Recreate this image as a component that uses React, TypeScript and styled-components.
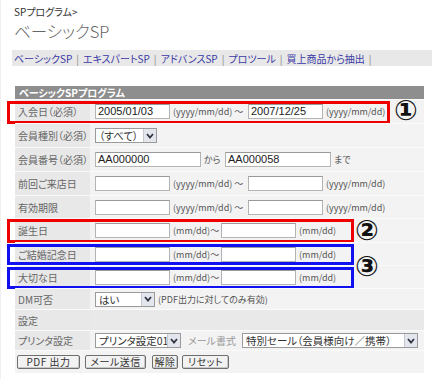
import React from "react";
import styled, { createGlobalStyle } from "styled-components";

const GlobalStyle = createGlobalStyle`
  html, body {
    margin: 0;
    padding: 0;
    background: #ffffff;
  }
  body {
    font-family: "Noto Sans CJK JP", "Noto Sans", sans-serif;
    font-feature-settings: "palt";
    color: #555;
  }
`;

const Page = styled.div`
  width: 432px;
  height: 379px;
  overflow: hidden;
  padding-top: 6px;
  box-sizing: border-box;
  border-left: 1px solid #f0f0f0;
`;

const Crumb = styled.div`
  margin-left: 13px;
  font-size: 10px;
  line-height: 12px;
  color: #333;
`;

const Title = styled.h1`
  margin: 3px 0 0 13px;
  font-size: 16.5px;
  line-height: 21px;
  font-weight: 300;
  color: #666;
`;

const Nav = styled.nav`
  margin: 8px 0 0 11px;
  height: 16px;
  background: #e8e8e8;
  display: flex;
  align-items: center;
  padding-left: 2px;
  font-size: 10px;
`;

const NavLink = styled.a`
  color: #3a3aa6;
  text-decoration: none;
`;

const Sep = styled.span`
  color: #888;
  margin: 0 4px;
`;

const Panel = styled.div`
  position: relative;
  margin: 20px 0 0 14px;
  width: 409px;
  background: #f3f3f3;
`;

const PanelHeader = styled.div`
  height: 13px;
  background: #8e8e8e;
  color: #fff;
  font-size: 10px;
  line-height: 13px;
  font-weight: 700;
  padding-left: 4px;
`;

const Row = styled.div<{ $h: number; $full?: boolean }>`
  position: relative;
  display: flex;
  height: ${(p) => p.$h}px;
  border-top: 1px solid #fafafa;
  background: ${(p) => (p.$full ? "#e9e9e9" : "#f3f3f3")};
`;

const Label = styled.div`
  width: 75px;
  flex: none;
  background: #e8e8e8;
  display: flex;
  align-items: center;
  padding-left: 3px;
  box-sizing: border-box;
  font-size: 10px;
  color: #666;
  white-space: nowrap;
`;

const Field = styled.div`
  flex: 1;
  display: flex;
  align-items: center;
  padding-left: 5px;
  gap: 3px;
  font-size: 10px;
  white-space: nowrap;
`;

const TextBox = styled.div<{ $w: number }>`
  width: ${(p) => p.$w}px;
  height: 15px;
  box-sizing: border-box;
  background: #fff;
  border: 1px solid #b4b4b4;
  border-top-color: #999;
  font-family: "Liberation Sans", Arial, sans-serif;
  font-size: 11px;
  line-height: 13px;
  padding-left: 2px;
  color: #222;
`;

const Hint = styled.span<{ $w?: number }>`
  color: #555;
  font-size: 9px;
  ${(p) => (p.$w ? `width: ${p.$w}px;` : "")}
`;

const SelectBox = styled.div<{ $w: number }>`
  width: ${(p) => p.$w}px;
  height: 15px;
  box-sizing: border-box;
  background: #fff;
  border: 1px solid #9a9a9a;
  display: flex;
  align-items: center;
  font-size: 10.5px;
  color: #333;
`;

const SelectText = styled.span`
  flex: 1;
  padding-left: 3px;
  overflow: hidden;
`;

const Arrow = styled.span`
  width: 12px;
  height: 13px;
  flex: none;
  background: #e3e6ec;
  border-left: 1px solid #c6c9d0;
  display: flex;
  align-items: center;
  justify-content: center;
`;

const GrayText = styled.span`
  color: #999;
  font-size: 10px;
  margin: 0 3px 0 4px;
`;

const Buttons = styled.div`
  display: flex;
  align-items: center;
  padding-left: 2px;
`;

const Btn = styled.button<{ $w: number; $gap: number }>`
  width: ${(p) => p.$w}px;
  margin-right: ${(p) => p.$gap}px;
  height: 14px;
  padding: 0;
  box-sizing: border-box;
  background: #f2f2f2;
  border: 1px solid #6e6e6e;
  border-radius: 2px;
  box-shadow: inset -1px -1px 0 #c8c8c8;
  font-family: "Noto Sans CJK JP", sans-serif;
  font-feature-settings: "palt";
  font-size: 10px;
  line-height: 12px;
  color: #333;
  letter-spacing: 0.5px;
`;

const Mark = styled.div<{ $c: string; $l: number; $w: number; $t: number; $b: number }>`
  position: absolute;
  left: ${(p) => p.$l}px;
  width: ${(p) => p.$w}px;
  top: ${(p) => p.$t}px;
  bottom: ${(p) => p.$b}px;
  border: 3px solid ${(p) => p.$c};
  box-sizing: border-box;
  pointer-events: none;
`;

const Num = styled.div<{ $x: number; $y: number }>`
  position: absolute;
  left: ${(p) => p.$x}px;
  top: ${(p) => p.$y}px;
  font-family: "DejaVu Sans", sans-serif;
  font-size: 28px;
  line-height: 28px;
  color: #111;
  font-weight: 700;
`;

const Chevron = () => (
  <svg width="8" height="6" viewBox="0 0 8 6">
    <polyline points="1,1 4,4.5 7,1" fill="none" stroke="#334" strokeWidth="1.8" />
  </svg>
);

const Select = ({ w, text }: { w: number; text: string }) => (
  <SelectBox $w={w}>
    <SelectText>{text}</SelectText>
    <Arrow>
      <Chevron />
    </Arrow>
  </SelectBox>
);

const navItems = ["ベーシックSP", "エキスパートSP", "アドバンスSP", "プロツール", "買上商品から抽出"];

const DateRow = ({ from = "", to = "" }: { from?: string; to?: string }) => (
  <Field>
    <TextBox $w={75}>{from}</TextBox>
    <Hint $w={72}>(yyyy/mm/dd) ～</Hint>
    <TextBox $w={75}>{to}</TextBox>
    <Hint>(yyyy/mm/dd)</Hint>
  </Field>
);

const DayRow = () => (
  <Field>
    <TextBox $w={75} />
    <Hint $w={45}>(mm/dd)～</Hint>
    <TextBox $w={75} />
    <Hint>(mm/dd)</Hint>
  </Field>
);

export default function App() {
  return (
    <Page>
      <GlobalStyle />
      <Crumb>SPプログラム&gt;</Crumb>
      <Title>ベーシックSP</Title>
      <Nav>
        {navItems.map((n, i) => (
          <React.Fragment key={n}>
            {i > 0 && <Sep>|</Sep>}
            <NavLink href="#">{n}</NavLink>
          </React.Fragment>
        ))}
        <Sep>|</Sep>
      </Nav>

      <Panel>
        <PanelHeader>ベーシックSPプログラム</PanelHeader>

        <Row $h={23}>
          <Label>入会日（必須）</Label>
          <DateRow from="2005/01/03" to="2007/12/25" />
          <Mark $c="#ee0000" $l={-8} $w={383} $t={1} $b={-1} />
        </Row>

        <Row $h={23}>
          <Label>会員種別（必須）</Label>
          <Field>
            <Select w={62} text="（すべて）" />
          </Field>
        </Row>

        <Row $h={23}>
          <Label>会員番号（必須）</Label>
          <Field>
            <TextBox $w={106}>AA000000</TextBox>
            <Hint $w={18}>から</Hint>
            <TextBox $w={106}>AA000058</TextBox>
            <Hint>まで</Hint>
          </Field>
        </Row>

        <Row $h={23}>
          <Label>前回ご来店日</Label>
          <DateRow />
        </Row>

        <Row $h={22}>
          <Label>有効期限</Label>
          <DateRow />
        </Row>

        <Row $h={23}>
          <Label>誕生日</Label>
          <DayRow />
          <Mark $c="#ee0000" $l={-8} $w={347} $t={0} $b={-1} />
        </Row>

        <Row $h={22}>
          <Label>ご結婚記念日</Label>
          <DayRow />
          <Mark $c="#1010f0" $l={-8} $w={347} $t={1} $b={0} />
        </Row>

        <Row $h={22}>
          <Label>大切な日</Label>
          <DayRow />
          <Mark $c="#1010f0" $l={-8} $w={347} $t={1} $b={-1} />
        </Row>

        <Row $h={20}>
          <Label>DM可否</Label>
          <Field>
            <Select w={60} text="はい" />
            <Hint>(PDF出力に対してのみ有効)</Hint>
          </Field>
        </Row>

        <Row $h={20} $full>
          <Label>設定</Label>
        </Row>

        <Row $h={19}>
          <Label>プリンタ設定</Label>
          <Field>
            <Select w={86} text="プリンタ設定01" />
            <GrayText>メール書式</GrayText>
            <Select w={176} text="特別セール（会員様向け／携帯）" />
          </Field>
        </Row>

        <Row $h={22}>
          <Buttons>
            <Btn $w={63} $gap={5}>PDF 出力</Btn>
            <Btn $w={61} $gap={6}>メール送信</Btn>
            <Btn $w={26} $gap={4}>解除</Btn>
            <Btn $w={47} $gap={0}>リセット</Btn>
          </Buttons>
        </Row>

        <Num $x={379} $y={11}>①</Num>
        <Num $x={340} $y={131}>②</Num>
        <Num $x={340} $y={167}>③</Num>
      </Panel>
    </Page>
  );
}
